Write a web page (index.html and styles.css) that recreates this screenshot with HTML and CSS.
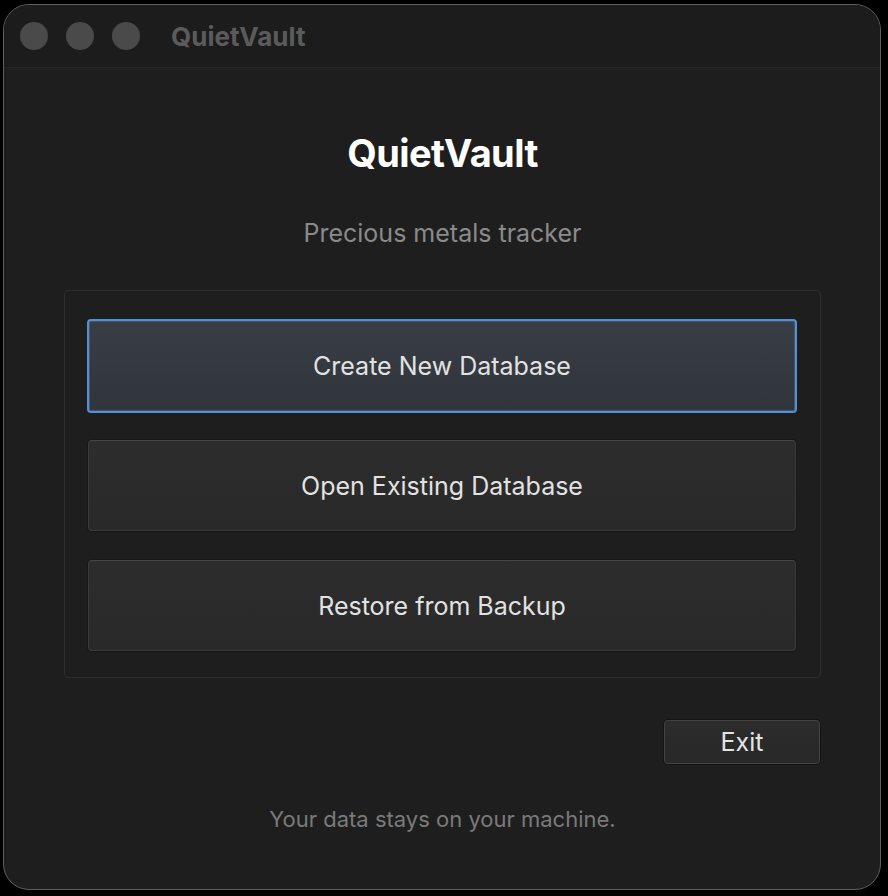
FILE: index.html
```html
<!DOCTYPE html>
<html>
<head>
<meta charset="utf-8">
<link rel="stylesheet" href="styles.css">
</head>
<body>
<div class="window">
  <div class="titlebar">
    <span class="light"></span><span class="light"></span><span class="light"></span>
    <span class="wtitle">QuietVault</span>
  </div>
  <div class="content">
    <h1 class="title">QuietVault</h1>
    <p class="subtitle">Precious metals tracker</p>
    <div class="panel">
      <button class="btn btn-primary">Create New Database</button>
      <button class="btn">Open Existing Database</button>
      <button class="btn">Restore from Backup</button>
    </div>
    <div class="exit-row"><button class="exit">Exit</button></div>
    <p class="footer">Your data stays on your machine.</p>
  </div>
</div>
</body>
</html>
```
FILE: styles.css
```css
html, body {
  margin: 0;
  padding: 0;
  background: #000;
}
body {
  padding: 4px 0 0 3px;
  font-family: Inter, "Noto Sans", sans-serif;
}
.window {
  box-sizing: border-box;
  width: 878px;
  height: 886px;
  border: 1px solid #5e5e5e;
  border-radius: 26px;
  background: #1e1e1e;
  overflow: hidden;
  display: flex;
  flex-direction: column;
}
.titlebar {
  height: 62px;
  flex: none;
  display: flex;
  align-items: center;
  padding-left: 16px;
  border-bottom: 1px solid #262626;
  background: #1c1c1c;
}
.light {
  width: 28px;
  height: 28px;
  border-radius: 50%;
  background: #4a4a4a;
  margin-right: 18px;
}
.wtitle {
  margin-left: 13px;
  font-size: 26px;
  font-weight: 700;
  color: #5b5b5b;
  letter-spacing: 0;
}
.content {
  display: flex;
  flex-direction: column;
  align-items: center;
  padding: 0 59px 0 60px;
}
.title {
  margin: 62px 0 0;
  font-size: 38px;
  line-height: 46px;
  font-weight: 700;
  color: #fff;
  letter-spacing: -0.6px;
}
.subtitle {
  margin: 42px 0 0;
  font-size: 25px;
  line-height: 30px;
  color: #8a8a8a;
}
.panel {
  box-sizing: border-box;
  align-self: stretch;
  margin-top: 42px;
  border: 1px solid #2e2e2e;
  border-radius: 4px;
  padding: 29px 24px 26px 23px;
  display: flex;
  flex-direction: column;
  gap: 29px;
}
.btn {
  box-sizing: border-box;
  height: 91px;
  border: 1px solid #3c3c3c;
  border-top-color: #474747;
  border-radius: 4px;
  background: linear-gradient(#2d2d2d, #292929);
  box-shadow: 0 1px 1px #141414, 0 0 0 1px #181818;
  color: #e2e2e2;
  font-family: Inter, "Noto Sans", sans-serif;
  font-size: 25px;
  padding: 0;
}
.btn-primary {
  height: 94px;
  margin: -1px -1px -2px;
  border: 2px solid #4e92de;
  background: linear-gradient(#393e46, #30343b);
  box-shadow: inset 0 0 0 1px #4f545c;
}
.exit-row {
  align-self: stretch;
  display: flex;
  justify-content: flex-end;
  margin-top: 42px;
  padding-right: 1px;
}
.exit {
  box-sizing: border-box;
  width: 156px;
  height: 44px;
  border: 1px solid #434343;
  border-radius: 4px;
  background: linear-gradient(#2c2c2c, #282828);
  box-shadow: 0 0 0 1px #141414;
  color: #e4e4e4;
  font-family: Inter, "Noto Sans", sans-serif;
  font-size: 25px;
  padding: 0;
}
.footer {
  margin: 40px 0 0;
  font-size: 22px;
  line-height: 30px;
  color: #7a7a7a;
}
```
